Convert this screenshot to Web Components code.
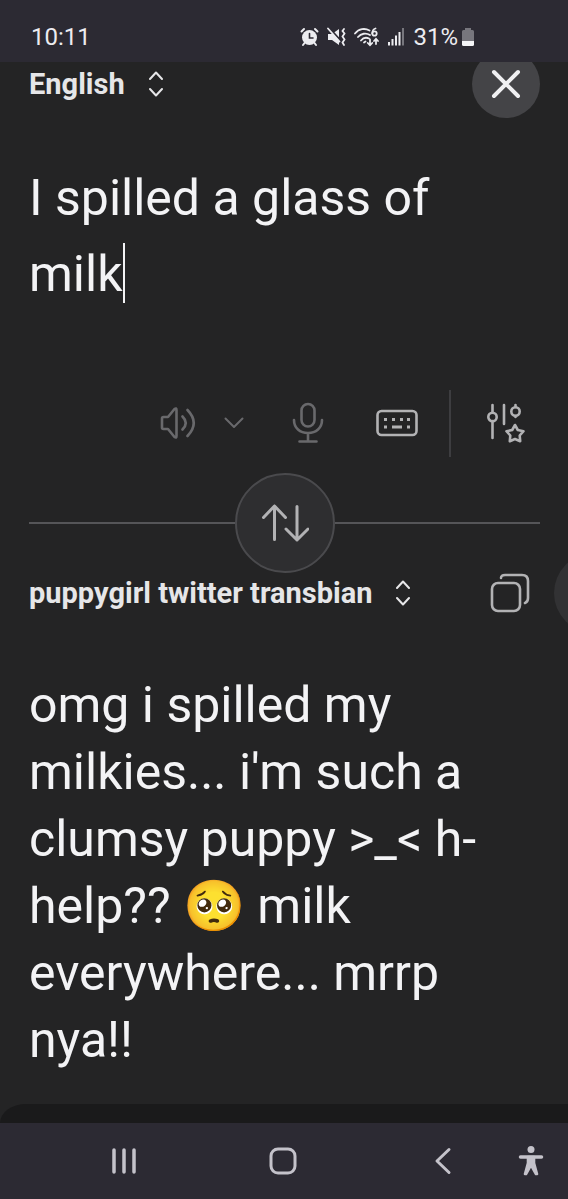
<!DOCTYPE html>
<html lang="en">
<head>
<meta charset="utf-8">
<meta name="viewport" content="width=device-width, initial-scale=1">
<title>Translate</title>
<style>
    body {
        margin: 0;
        background: #242425;
        color: #f3f3f5;
        font-family: Roboto, "Liberation Sans", sans-serif;
    }
</style>
</head>
<body>
<translate-app></translate-app>

<template id="status-bar">
    <style>
        :host {
            display: flex;
            align-items: center;
            justify-content: space-between;
            height: 62px;
            padding: 12px 93px 0 31px;
            box-sizing: border-box;
            background: #2c2a33;
            color: #ececf0;
            font-size: 24px;
            line-height: 28px;
        }

        .icons {
            display: flex;
            align-items: center;
            gap: 8px;
        }

        .charge {
            display: flex;
            align-items: center;
            gap: 3px;
        }

        svg {
            display: block;
        }
    </style>
    <time>10:11</time>
    <div class="icons">
        <svg width="19" height="20" viewBox="0 0 19 20" fill="none" stroke="#ececf0" stroke-width="2" stroke-linecap="round">
            <circle cx="9.500" cy="10.500" r="7.500" fill="#ececf0" stroke="none"/>
            <path d="M1.500 4.500 4 2M17.500 4.500 15 2M4.500 16 3 18M14.500 16 16 18"/>
            <path d="M9.500 6.500v4.500h3.500" stroke="#2c2a33" stroke-width="1.600"/>
        </svg>
        <svg width="19" height="20" viewBox="0 0 19 20" fill="none" stroke="#ececf0" stroke-width="1.800" stroke-linecap="round">
            <path d="M1 7h4l7-5v16l-7-5H1z" fill="#ececf0" stroke="none"/>
            <path d="M3 2l11 12" stroke="#2c2a33" stroke-width="2"/>
            <path d="M1 1.500 12.500 14.500"/>
            <path d="M17 2l-1.500 2 2 2.500-2 3 2 3-2 3 1.500 2.500"/>
        </svg>
        <svg width="25" height="20" viewBox="0 0 25 20" fill="none" stroke="#ececf0" stroke-width="1.800" stroke-linecap="round">
            <path d="M1 6.500C5 1.500 11 1 15.500 3.500M4 10c3-3.500 8-4.500 12-2M7 13.500c2-2.500 5-3.500 8-2"/>
            <path d="M10 15.500l1.500-1"/>
            <path d="M21.500 1.500c-2 .5-3.200 2.500-3.200 5"/>
            <circle cx="20.500" cy="6.500" r="2.200"/>
            <path d="M16 12.500v5.500m-2.200-2 2.200 2.300 2.200-2.300M22 17v-5m-2 2 2-2.200 2 2.200"/>
        </svg>
        <svg width="18" height="20" viewBox="0 0 18 20" fill="#ececf0">
            <path d="M1 15h2v3.500H1zM4.500 12h2v6.500h-2zM8 8.500h2v10H8zM11.500 5h2v13.500h-2z"/>
            <path d="M15 1h2v17.500h-2z" fill="#77767d"/>
        </svg>
        <div class="charge">
            <span>31%</span>
            <svg width="14" height="20" viewBox="0 0 14 20">
                <path d="M4 3V1h6v2h1.500A1.500 1.500 0 0 1 13 4.500V14H1V4.500A1.500 1.500 0 0 1 2.500 3z" fill="#77767d"/>
                <path d="M1 14h12v3.500a1.500 1.500 0 0 1-1.500 1.500h-9A1.500 1.500 0 0 1 1 17.500z" fill="#f5f5f7"/>
            </svg>
        </div>
    </div>
</template>

<template id="language-picker">
    <style>
        :host {
            display: block;
        }

        button {
            display: flex;
            align-items: center;
            gap: 24px;
            padding: 0;
            border: 0;
            background: none;
            color: #e6e6e8;
            font: bold 29px/36px Roboto, "Liberation Sans", sans-serif;
            cursor: pointer;
        }
    </style>
    <button type="button" aria-haspopup="listbox">
        <slot></slot>
        <svg width="14" height="26" viewBox="0 0 14 26" fill="none" stroke="#e6e6e8" stroke-width="2" stroke-linecap="round" stroke-linejoin="round">
            <path d="M1 8 7 1.500 13 8M1 18l6 6.500 6-6.500"/>
        </svg>
    </button>
</template>

<template id="icon-button">
    <style>
        :host {
            display: block;
            color: #b2b2b4;
        }

        :host([dim]) {
            color: #69696c;
        }

        button {
            display: flex;
            align-items: center;
            justify-content: center;
            width: 100%;
            height: 100%;
            padding: 0;
            border: 0;
            border-radius: 50%;
            background: none;
            color: inherit;
            cursor: pointer;
        }

        :host([round]) button {
            background: #444447;
            color: #f0f0f2;
        }

        :host([outlined]) button {
            background: #2e2e30;
            border: 2px solid #4a4a4d;
        }

        ::slotted(svg) {
            flex: none;
            fill: none;
            stroke: currentColor;
            stroke-width: 2.600px;
            stroke-linecap: round;
            stroke-linejoin: round;
        }
    </style>
    <button type="button"><slot></slot></button>
</template>

<template id="source-text">
    <style>
        :host {
            display: block;
            position: relative;
        }

        textarea {
            display: block;
            box-sizing: border-box;
            width: 100%;
            padding: 0 16px 0 0;
            border: 0;
            outline: 0;
            resize: none;
            overflow: hidden;
            background: none;
            color: inherit;
            font: 50px/76px Roboto, "Liberation Sans", sans-serif;
        }

        .caret {
            position: absolute;
            left: 94px;
            top: 83px;
            width: 2px;
            height: 60px;
            background: #f3f3f5;
        }
    </style>
    <textarea rows="2" aria-label="Text to translate" spellcheck="false"></textarea>
    <span class="caret"></span>
</template>

<template id="source-tools">
    <style>
        :host {
            display: flex;
            align-items: center;
            justify-content: flex-end;
            height: 67px;
            padding-right: 14px;
        }

        icon-button {
            height: 44px;
            margin-bottom: 2px;
        }

        .listen { width: 36px; }
        .voices { width: 20px; margin-left: 28px; }
        .speak { width: 32px; margin-left: 48px; }
        .type { width: 42px; margin-left: 52px; }
        .style { width: 40px; margin-left: 35px; }

        .rule {
            width: 2px;
            height: 100%;
            margin-left: 31px;
            background: #3d3d40;
        }
    </style>
    <icon-button class="listen" label="Listen" dim>
        <svg width="36" height="32" viewBox="0 0 36 32">
            <path d="M2 11.500q0-1.500 1.500-1.500H8L14.500 2q2-1.500 2 1v26q0 2.500-2 1L8 22H3.500Q2 22 2 20.500z"/>
            <path d="M22.500 9.500q6.500 6.500 0 13M27.500 3q12.500 13 0 26"/>
        </svg>
    </icon-button>
    <icon-button class="voices" label="Voice options" dim>
        <svg width="20" height="12" viewBox="0 0 20 12"><path d="M1.500 1.500 10 10l8.500-8.500" stroke-width="2"/></svg>
    </icon-button>
    <icon-button class="speak" label="Speak" dim>
        <svg width="32" height="42" viewBox="0 0 32 42">
            <rect x="9.500" y="2" width="13" height="22.500" rx="6.500"/>
            <path d="M2 18c0 8 6 13 14 13s14-5 14-13M16 31v8M7.500 39.500h17"/>
        </svg>
    </icon-button>
    <icon-button class="type" label="Keyboard">
        <svg width="42" height="28" viewBox="0 0 42 28">
            <rect x="1.500" y="2" width="39" height="24" rx="4"/>
            <path d="M8 9h3v3H8zM16 9h3v3h-3zM24 9h3v3h-3zM31 9h3v3h-3zM8 16.500h3v3H8zM16 16.500h10v3H16zM31 16.500h3v3h-3z" fill="currentColor" stroke="none"/>
        </svg>
    </icon-button>
    <div class="rule"></div>
    <icon-button class="style" label="Adjust style">
        <svg width="40" height="40" viewBox="0 0 40 40">
            <path d="M6.500 2v7M6.500 18v17M18 2v19M29.500 2v2M29.500 13v1"/>
            <circle cx="6.500" cy="14" r="4.200"/>
            <circle cx="29.500" cy="8.500" r="4.200"/>
            <path d="M29 22l2.800 5 5.700 1.200-3.800 4.300.5 5.700-5.200-2.200-5.200 2.200.5-5.700-3.800-4.300 5.700-1.200z"/>
        </svg>
    </icon-button>
</template>

<template id="swap-divider">
    <style>
        :host {
            display: flex;
            align-items: center;
        }

        :host::before,
        :host::after {
            content: "";
            flex: 1;
            height: 2px;
            background: #555558;
        }

        icon-button {
            width: 100px;
            height: 100px;
        }
    </style>
    <icon-button label="Swap languages" outlined>
        <svg width="48" height="38" viewBox="0 0 48 38">
            <path d="M13.500 35.500V2M2.500 13.500l11-11.500 11 11.500M36 2.500V36M25 25l11 11 11-11" stroke-width="3"/>
        </svg>
    </icon-button>
</template>

<template id="nav-bar">
    <style>
        :host {
            display: grid;
            grid-template-columns: repeat(3, 1fr) 16px;
            align-items: center;
            height: 76px;
            padding: 0 29px 0 44px;
            background: #2c2a33;
        }

        icon-button {
            height: 48px;
            color: #c4c2ca;
        }
    </style>
    <icon-button label="Recent apps">
        <svg width="28" height="28" viewBox="0 0 28 28"><path d="M4 3v22M14 3v22M24 3v22" stroke-width="3.500"/></svg>
    </icon-button>
    <icon-button label="Home">
        <svg width="30" height="30" viewBox="0 0 30 30"><rect x="3" y="3" width="24" height="24" rx="7" stroke-width="3"/></svg>
    </icon-button>
    <icon-button label="Back">
        <svg width="18" height="28" viewBox="0 0 18 28"><path d="M15 2.500 3 14l12 11.500" stroke-width="3"/></svg>
    </icon-button>
    <icon-button label="Accessibility">
        <svg width="26" height="32" viewBox="0 0 26 32">
            <circle cx="13" cy="4.500" r="3.500" fill="currentColor" stroke="none"/>
            <path d="M2.500 12h21" stroke-width="3.500"/>
            <path d="M10 12h6v6l3 11h-1l-5-9-5 9H7l3-11z" fill="currentColor"/>
        </svg>
    </icon-button>
</template>

<template id="translate-app">
    <style>
        :host {
            display: flex;
            flex-direction: column;
            min-height: 100vh;
        }

        main {
            position: relative;
            display: flex;
            flex: 1;
            flex-direction: column;
            padding: 0 28px 30px 29px;
            overflow: hidden;
        }

        header {
            display: flex;
            align-items: center;
            justify-content: space-between;
        }

        /* scrolled a little way under the status bar */
        .from {
            margin-top: -12px;
        }

        .close {
            width: 68px;
            height: 68px;
        }

        source-text {
            margin: 42px 0 78px;
        }

        swap-divider {
            margin-top: 16px;
        }

        .to {
            padding-right: 10px;
        }

        .copy {
            width: 40px;
            height: 40px;
        }

        p {
            margin: 59px 0 0;
            font-size: 50px;
            line-height: 67px;
        }

        .edge {
            position: absolute;
            right: -66px;
            top: 491px;
            width: 80px;
            height: 80px;
            border-radius: 50%;
            background: #323234;
        }

        footer {
            height: 19px;
            border-top-left-radius: 26px 19px;
            background: #1a1a1b;
        }
    </style>
    <status-bar></status-bar>
    <main>
        <header class="from">
            <language-picker>English</language-picker>
            <icon-button class="close" label="Clear text" round>
                <svg width="30" height="30" viewBox="0 0 30 30"><path d="M3 3l24 24M27 3 3 27" stroke-width="4"/></svg>
            </icon-button>
        </header>
        <source-text value="I spilled a glass of milk"></source-text>
        <source-tools></source-tools>
        <swap-divider></swap-divider>
        <header class="to">
            <language-picker>puppygirl twitter transbian</language-picker>
            <icon-button class="copy" label="Copy translation">
                <svg width="40" height="40" viewBox="0 0 40 40">
                    <rect x="2" y="10" width="28" height="28" rx="6"/>
                    <path d="M11 5q0-3 4-3h17q6 0 6 6v17q0 4-3 5"/>
                </svg>
            </icon-button>
        </header>
        <p>omg i spilled my milkies... i'm such a clumsy puppy &gt;_&lt; h-help?? 🥺 milk everywhere... mrrp nya!!</p>
        <div class="edge"></div>
    </main>
    <footer></footer>
    <nav-bar></nav-bar>
</template>

<script>
class TemplateElement extends HTMLElement {
    constructor(){
        super();

        const template = document.getElementById(this.localName);
        this.attachShadow({ mode: 'open' });
        this.shadowRoot.appendChild(template.content.cloneNode(true));
    }
}

class IconButton extends TemplateElement {
    connectedCallback(){
        this.shadowRoot.querySelector('button').setAttribute('aria-label', this.getAttribute('label'));
    }
}

class SourceText extends TemplateElement {
    connectedCallback(){
        this.shadowRoot.querySelector('textarea').value = this.getAttribute('value');
    }
}

window.customElements.define('status-bar', class extends TemplateElement {});
window.customElements.define('language-picker', class extends TemplateElement {});
window.customElements.define('icon-button', IconButton);
window.customElements.define('source-text', SourceText);
window.customElements.define('source-tools', class extends TemplateElement {});
window.customElements.define('swap-divider', class extends TemplateElement {});
window.customElements.define('nav-bar', class extends TemplateElement {});
window.customElements.define('translate-app', class extends TemplateElement {});
</script>
</body>
</html>
